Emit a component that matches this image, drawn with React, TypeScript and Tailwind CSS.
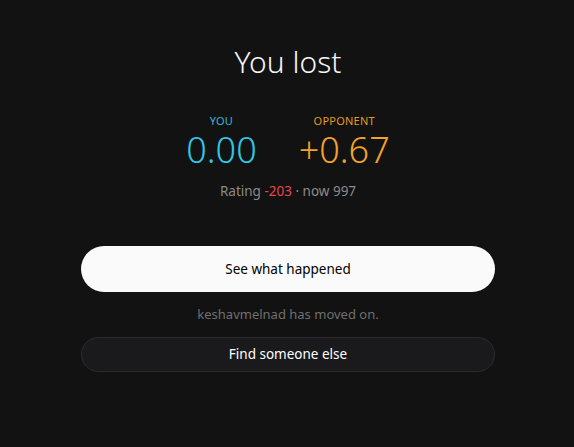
export default function App() {
  return (
    <div
      className="min-h-[447px] w-full bg-[#121212] flex justify-center"
      style={{ fontFamily: '"Noto Sans", "Open Sans", sans-serif' }}
    >
      <div className="w-[414px] ml-[2px] flex flex-col items-center pt-[42px]">
        <h1 className="text-[30px] leading-[40px] font-light text-[#f5f5f5]">You lost</h1>

        <div className="mt-[32px] flex gap-[42px]">
          <div className="flex flex-col items-center">
            <span className="text-[11px] leading-[14px] text-[#38b6d6] tracking-[0.02em]">YOU</span>
            <span className="mt-[4px] text-[36px] leading-[36px] font-light text-[#2ec8e6]">0.00</span>
          </div>
          <div className="flex flex-col items-center">
            <span className="text-[11px] leading-[14px] text-[#e39a1f] tracking-[0.02em]">OPPONENT</span>
            <span className="mt-[4px] text-[36px] leading-[36px] font-light text-[#f2a22a]">+0.67</span>
          </div>
        </div>

        <p className="mt-[14px] text-[13.5px] leading-[18px] text-[#8a8a8a]">
          Rating <span className="text-[#e5484d]">-203</span> · now 997
        </p>

        <button className="mt-[46px] w-full h-[46px] rounded-full bg-[#fafafa] text-[13.5px] font-normal text-black">
          See what happened
        </button>

        <p className="mt-[13px] text-[13px] leading-[18px] text-[#6f6f6f]">keshavmelnad has moved on.</p>

        <button className="mt-[14px] w-full h-[35px] rounded-full bg-[#1a1a1c] border border-[#2c2c2e] text-[13.5px] font-normal text-white">
          Find someone else
        </button>
      </div>
    </div>
  );
}
